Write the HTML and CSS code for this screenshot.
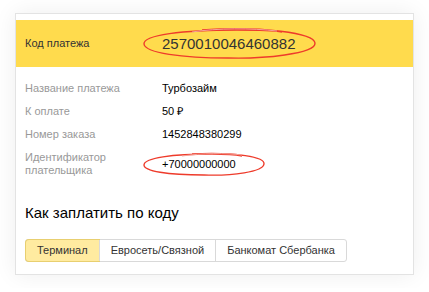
FILE: index.html
```html
<!DOCTYPE html>
<html lang="ru">
<head>
    <meta charset="UTF-8">
    <title>Код платежа</title>
    <link rel="stylesheet" href="styles.css">
</head>
<body>

<div class="page">
    <div class="card">
        <div class="code-band">
            <span class="label">Код платежа</span>
            <span class="code marked">
                2570010046460882
                <svg class="ring ring-code" viewBox="0 0 175 33" preserveAspectRatio="none">
                    <path d="M60 3 C 120 -1, 172 6, 173 16 C 174 27, 120 32, 86 31 C 40 31, 3 26, 2 17 C 1 8, 40 3, 95 3 C 120 3, 135 4, 140 5"/>
                    <path class="faint" d="M50 5 C 75 1, 110 1, 135 4"/>
                </svg>
            </span>
        </div>

        <div class="details">
            <div class="row">
                <span class="label">Название платежа</span>
                <span class="value">Турбозайм</span>
            </div>
            <div class="row">
                <span class="label">К оплате</span>
                <span class="value">50 ₽</span>
            </div>
            <div class="row">
                <span class="label">Номер заказа</span>
                <span class="value">1452848380299</span>
            </div>
            <div class="row">
                <span class="label">Идентификатор<br>плательщика</span>
                <span class="value marked">
                    +70000000000
                    <svg class="ring ring-phone" viewBox="0 0 124 25" preserveAspectRatio="none">
                        <path d="M50 2 C 95 0, 123 5, 122 12 C 121 20, 90 24, 62 23 C 25 23, 2 19, 2 13 C 2 6, 30 2, 70 2 C 85 2, 95 3, 100 4"/>
                        <path class="faint" d="M40 4 C 60 1, 85 1, 100 3"/>
                    </svg>
                </span>
            </div>
        </div>

        <h2>Как заплатить по коду</h2>

        <div class="tabs">
            <span class="tab active">Терминал</span>
            <span class="tab">Евросеть/Связной</span>
            <span class="tab">Банкомат Сбербанка</span>
        </div>
    </div>
</div>

</body>
</html>
```

FILE: styles.css
```css
body {
    font-family: "Liberation Sans", Arial, sans-serif;
    background-color: #fff;
    margin: 0;
    color: #000;
}

.page {
    padding: 13px 15px;
    width: 399px;
}

.card {
    background-color: white;
    border: 1px solid #e3e3e3;
    box-shadow: 0 0 22px rgba(0, 0, 0, 0.07);
    padding-top: 6px;
    height: 254px;
}

.code-band {
    background-color: #ffdb4d;
    height: 47px;
    display: flex;
    align-items: center;
    padding-left: 9px;
}

.label {
    width: 137px;
    font-size: 11px;
    line-height: 13px;
    color: #999;
    flex-shrink: 0;
}

.code-band .label {
    color: #333;
}

.code {
    font-size: 15px;
    line-height: 17px;
    color: #333;
}

.marked {
    position: relative;
    display: inline-block;
}

.ring {
    position: absolute;
    overflow: visible;
    fill: none;
    stroke: #ee3b2b;
    stroke-width: 1.4;
}

.ring .faint {
    stroke: #f4a49a;
    stroke-width: 1;
}

.ring-code {
    left: -20px;
    top: -8px;
    width: 175px;
    height: 33px;
}

.ring-phone {
    left: -20px;
    top: -6px;
    width: 124px;
    height: 25px;
}

.details {
    padding: 10px 0 0 9px;
}

.row {
    display: flex;
    align-items: center;
    padding: 5px 0;
}

.value {
    font-size: 11px;
    line-height: 13px;
}

h2 {
    font-size: 15px;
    font-weight: normal;
    margin: 22px 0 0 9px;
    line-height: 18px;
    color: #000;
}

.tabs {
    display: inline-flex;
    margin: 17px 0 0 9px;
    border: 1px solid #d9d9d9;
    border-radius: 3px;
}

.tab {
    font-size: 11px;
    line-height: 21px;
    padding: 0 11px;
    color: #333;
    border-left: 1px solid #d9d9d9;
}

.tab:first-child {
    border-left: none;
}

.tab.active {
    background-color: #ffeba0;
    box-shadow: 0 0 0 1px #e8cf70;
    border-radius: 3px 0 0 3px;
}
```
